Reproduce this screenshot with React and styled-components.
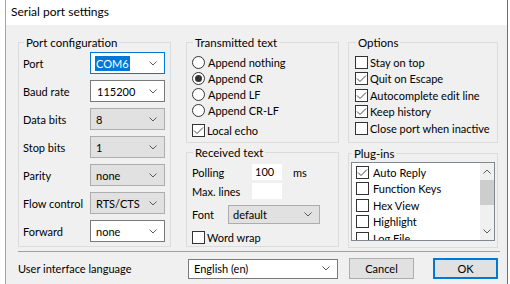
import React from 'react';
import styled, { createGlobalStyle, css } from 'styled-components';

const GlobalStyle = createGlobalStyle`
  html, body {
    margin: 0;
    background: #fff;
  }
  body {
    font-family: Lato, "Noto Sans", sans-serif;
    font-size: 11px;
    color: #000;
  }
  * {
    box-sizing: border-box;
  }
`;

const Screen = styled.div`
  display: flex;
  width: 510px;
  height: 284px;
  overflow: hidden;
  background: #fff;
`;

const Backdrop = styled.div`
  flex: none;
  width: 5px;
  background: #fff;
`;

const Window = styled.div`
  flex: none;
  width: 503px;
  display: flex;
  flex-direction: column;
  border-left: 1px solid #a5a5a5;
  border-right: 1px solid #6e6e6e;
`;

const TitleBar = styled.div`
  height: 25px;
  flex: none;
  background: #fff;
  padding: 4px 0 0 5px;
  line-height: 15px;
  font-size: 12px;
`;

const Body = styled.div`
  flex: 1;
  background: #f0f0f0;
  padding: 10px 8px 0 12px;
  display: flex;
  flex-direction: column;
`;

const GroupsRow = styled.div`
  display: flex;
  align-items: flex-start;
  height: 213px;
`;

const Column = styled.div`
  display: flex;
  flex-direction: column;
  width: ${(p) => p.$width}px;
  margin-left: ${(p) => p.$offset || 0}px;
`;

const Group = styled.fieldset`
  margin: 0;
  margin-top: ${(p) => p.$top || 0}px;
  min-width: 0;
  height: ${(p) => p.$height}px;
  border: 1px solid #dcdcdc;
  padding: ${(p) => p.$pad || '0'};
`;

const Legend = styled.legend`
  padding: 0 2px;
  margin-left: 1px;
  line-height: 15px;
  font-size: 11.5px;
`;

const FormGrid = styled.div`
  display: grid;
  grid-template-columns: 67px 75px;
  grid-auto-rows: 22px;
  row-gap: 6px;
  align-items: center;
`;

const Label = styled.span`
  white-space: nowrap;
  width: ${(p) => (p.$width ? `${p.$width}px` : 'auto')};
  flex: none;
`;

const comboLooks = {
  edit: css`
    background: #fff;
    border-color: #7a7a7a;
  `,
  focus: css`
    background: #fff;
    border-color: #0078d7;
  `,
  list: css`
    background: #e1e1e1;
    border-color: #adadad;
  `,
};

const Combo = styled.div`
  display: flex;
  align-items: center;
  justify-content: space-between;
  height: ${(p) => p.$height || 22}px;
  width: ${(p) => (p.$width ? `${p.$width}px` : 'auto')};
  border: 1px solid;
  padding: 0 7px 0 ${(p) => p.$indent || 5}px;
  ${(p) => comboLooks[p.$look || 'list']}
`;

const Selected = styled.span`
  background: #0078d7;
  color: #fff;
  padding: 1px 1px;
  margin-left: -1px;
`;

const Chevron = ({ up }) => (
  <svg width="8" height="5" viewBox="0 0 8 5">
    <polyline
      points={up ? '0.5,4.5 4,1 7.5,4.5' : '0.5,0.5 4,4 7.5,0.5'}
      fill="none"
      stroke="#5a5a5a"
      strokeWidth="1"
    />
  </svg>
);

const Stack = styled.div`
  display: flex;
  flex-direction: column;
`;

const OptionRow = styled.label`
  display: flex;
  align-items: center;
  gap: ${(p) => p.$gap || 3}px;
  height: ${(p) => p.$height || 16}px;
  margin-top: ${(p) => p.$top || 0}px;
  white-space: nowrap;
`;

const RadioCircle = styled.span`
  width: 13px;
  height: 13px;
  flex: none;
  border-radius: 50%;
  border: 1px solid #333;
  background: #fff;
  display: flex;
  align-items: center;
  justify-content: center;

  &::after {
    content: '';
    width: 7px;
    height: 7px;
    border-radius: 50%;
    background: ${(p) => (p.$on ? '#333' : 'transparent')};
  }
`;

const Box = styled.span`
  width: 13px;
  height: 13px;
  flex: none;
  border: 1px solid #333;
  background: #fff;
  display: flex;
  align-items: center;
  justify-content: center;
`;

const Check = ({ on }) => (
  <Box>
    {on && (
      <svg width="11" height="11" viewBox="0 0 11 11">
        <polyline points="1,5.5 4,8.5 10,2.5" fill="none" stroke="#444" strokeWidth="1" />
      </svg>
    )}
  </Box>
);

const Radio = ({ on, children }) => (
  <OptionRow>
    <RadioCircle $on={on} />
    {children}
  </OptionRow>
);

const CheckRow = ({ on, children, gap, height, top }) => (
  <OptionRow $gap={gap} $height={height} $top={top}>
    <Check on={on} />
    {children}
  </OptionRow>
);

const FieldRow = styled.div`
  display: flex;
  align-items: center;
  height: ${(p) => p.$height}px;
  margin-top: ${(p) => p.$top || 0}px;
`;

const TextBox = styled.div`
  width: 30px;
  height: 16px;
  background: #fff;
  padding-left: 3px;
  line-height: 16px;
`;

const Unit = styled.span`
  margin-left: 11px;
`;

const ListBox = styled.div`
  display: flex;
  height: 79px;
  border: 1px solid #828790;
  background: #fff;
  overflow: hidden;
`;

const ListItems = styled.div`
  flex: 1;
  padding: 1px 0 0 4px;
`;

const ScrollBar = styled.div`
  width: 14px;
  flex: none;
  background: #f0f0f0;
  display: flex;
  flex-direction: column;
  align-items: center;
`;

const ScrollArrow = styled.div`
  height: 17px;
  width: 100%;
  display: flex;
  align-items: center;
  justify-content: center;
`;

const ScrollThumb = styled.div`
  width: 100%;
  height: 25px;
  background: #cdcdcd;
`;

const ScrollTrack = styled.div`
  flex: 1;
`;

const Separator = styled.div`
  height: 1px;
  background: #a0a0a0;
  margin: 3px 0 0 0;
  width: 482px;
`;

const Footer = styled.div`
  display: flex;
  align-items: center;
  margin-top: 6px;
  height: 21px;
`;

const FooterLabel = styled.span`
  width: 170px;
  flex: none;
`;

const Button = styled.button`
  width: 65px;
  height: 21px;
  margin-left: ${(p) => p.$gap}px;
  font: inherit;
  color: #000;
  background: #e1e1e1;
  border: ${(p) => (p.$primary ? '2px solid #0078d7' : '1px solid #adadad')};
  padding: 0;
`;

const plugins = [
  ['Auto Reply', true],
  ['Function Keys', false],
  ['Hex View', false],
  ['Highlight', false],
  ['Log File', false],
];

export default function App() {
  return (
    <>
      <GlobalStyle />
      <Screen>
        <Backdrop />
        <Window>
          <TitleBar>Serial port settings</TitleBar>
          <Body>
            <GroupsRow>
              <Column $width={153}>
                <Group $height={212} $pad="2px 4px 0 4px">
                  <Legend>Port configuration</Legend>
                  <FormGrid>
                    <Label>Port</Label>
                    <Combo $look="focus">
                      <span>
                        <Selected>COM6</Selected>
                      </span>
                      <Chevron />
                    </Combo>
                    <Label>Baud rate</Label>
                    <Combo $look="edit" $indent={6}>
                      115200
                      <Chevron />
                    </Combo>
                    <Label>Data bits</Label>
                    <Combo>
                      8
                      <Chevron />
                    </Combo>
                    <Label>Stop bits</Label>
                    <Combo>
                      1
                      <Chevron />
                    </Combo>
                    <Label>Parity</Label>
                    <Combo>
                      none
                      <Chevron />
                    </Combo>
                    <Label>Flow control</Label>
                    <Combo>
                      RTS/CTS
                      <Chevron />
                    </Combo>
                    <Label>Forward</Label>
                    <Combo $look="edit">
                      none
                      <Chevron />
                    </Combo>
                  </FormGrid>
                </Group>
              </Column>

              <Column $width={153} $offset={15}>
                <Group $height={108} $pad="4px 4px 0 5px">
                  <Legend>Transmitted text</Legend>
                  <Stack>
                    <Radio>Append nothing</Radio>
                    <Radio on>Append CR</Radio>
                    <Radio>Append LF</Radio>
                    <Radio>Append CR-LF</Radio>
                    <CheckRow on gap={2} top={4}>
                      Local echo
                    </CheckRow>
                  </Stack>
                </Group>
                <Group $height={102} $top={2} $pad="4px 4px 0 5px">
                  <Legend>Received text</Legend>
                  <Stack>
                    <FieldRow $height={16}>
                      <Label $width={60}>Polling</Label>
                      <TextBox>100</TextBox>
                      <Unit>ms</Unit>
                    </FieldRow>
                    <FieldRow $height={16} $top={3}>
                      <Label $width={60}>Max. lines</Label>
                      <TextBox />
                    </FieldRow>
                    <FieldRow $height={19} $top={6}>
                      <Label $width={36}>Font</Label>
                      <Combo $height={19} $width={92} $indent={4}>
                        default
                        <Chevron />
                      </Combo>
                    </FieldRow>
                    <CheckRow gap={2} top={5}>
                      Word wrap
                    </CheckRow>
                  </Stack>
                </Group>
              </Column>

              <Column $width={150} $offset={9}>
                <Group $height={108} $pad="4px 4px 0 6px">
                  <Legend>Options</Legend>
                  <Stack>
                    <CheckRow gap={2} height={16.5}>
                      Stay on top
                    </CheckRow>
                    <CheckRow on gap={2} height={16.5}>
                      Quit on Escape
                    </CheckRow>
                    <CheckRow on gap={2} height={16.5}>
                      Autocomplete edit line
                    </CheckRow>
                    <CheckRow on gap={2} height={16.5}>
                      Keep history
                    </CheckRow>
                    <CheckRow gap={2} height={16.5}>
                      Close port when inactive
                    </CheckRow>
                  </Stack>
                </Group>
                <Group $height={102} $top={3} $pad="1px 2px 0 2px">
                  <Legend>Plug-ins</Legend>
                  <ListBox>
                    <ListItems>
                      {plugins.map(([name, on]) => (
                        <CheckRow key={name} on={on} gap={4} height={16.5}>
                          {name}
                        </CheckRow>
                      ))}
                    </ListItems>
                    <ScrollBar>
                      <ScrollArrow>
                        <Chevron up />
                      </ScrollArrow>
                      <ScrollThumb />
                      <ScrollTrack />
                      <ScrollArrow>
                        <Chevron />
                      </ScrollArrow>
                    </ScrollBar>
                  </ListBox>
                </Group>
              </Column>
            </GroupsRow>

            <Separator />

            <Footer>
              <FooterLabel>User interface language</FooterLabel>
              <Combo $look="edit" $width={150} $height={20}>
                English (en)
                <Chevron />
              </Combo>
              <Button $gap={11}>Cancel</Button>
              <Button $gap={19} $primary>
                OK
              </Button>
            </Footer>
          </Body>
        </Window>
      </Screen>
    </>
  );
}
